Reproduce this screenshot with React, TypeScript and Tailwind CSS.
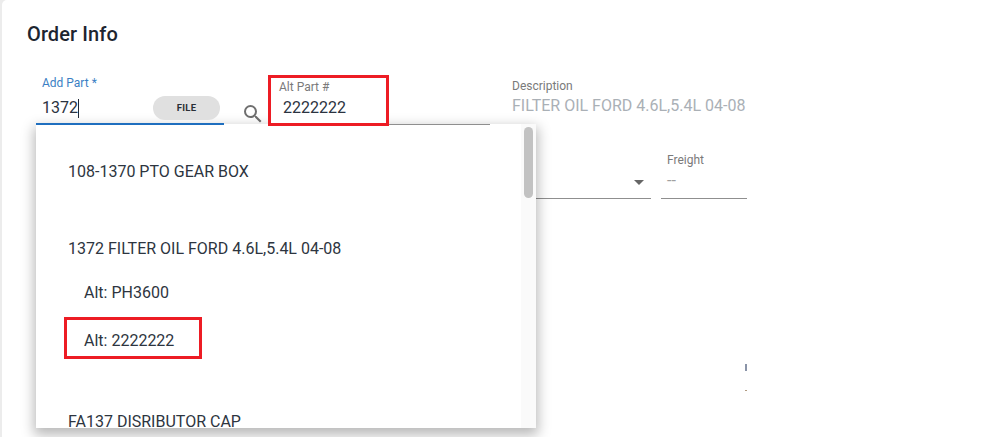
import { MdSearch } from 'react-icons/md';

const font = "font-['Roboto',sans-serif]";

function PartDropdown() {
  return (
    <div className="absolute left-[36px] top-[124px] flex h-[304px] w-[500px] overflow-hidden bg-white shadow-[0_5px_12px_2px_rgba(0,0,0,0.28)]">
      <div className="flex-1 overflow-hidden pl-[32px] text-[16px] leading-[20px] text-[#2d3540]">
        <div className="pt-[38px]">108-1370 PTO GEAR BOX</div>
        <div className="pt-[57px]">1372 FILTER OIL FORD 4.6L,5.4L 04-08</div>
        <div className="pl-[16px] pt-[24px]">Alt: PH3600</div>
        <div className="pl-[16px] pt-[28px]">Alt: 2222222</div>
        <div className="pt-[61px]">FA137 DISRIBUTOR CAP</div>
      </div>
      <div className="w-[15px] bg-[#fafafa] pl-[3px] pt-[3px]">
        <div className="h-[71px] w-[9px] rounded-[5px] bg-[#c2c2c2]" />
      </div>
    </div>
  );
}

export default function App() {
  return (
    <div className={`${font} relative h-[437px] w-[983px] overflow-hidden bg-[#ececec] pl-[2px]`}>
      <div className="h-full rounded-tl-[5px] bg-white pl-[25px] pt-[22px]">
        <h1 className="text-[20px] font-medium leading-[24px] tracking-[0.1px] text-[#1d2530]">Order Info</h1>

        <div className="mt-[29px] flex h-[50px] items-stretch">
          <div className="relative z-10 ml-[9px] w-[188px] border-b-2 border-[#1f6fbf] pl-[6px] pt-[1px]">
            <div className="text-[12px] leading-[14px] text-[#3b7fc4]">Add Part *</div>
            <div className="mt-[6px] flex h-[24px] items-center text-[16px] text-[#2b3340]">
              1372<span className="h-[19px] w-px bg-[#1f2937]" />
            </div>
            <div className="absolute left-[117px] top-[21px] flex h-[24px] w-[67px] items-center justify-center rounded-full bg-[#e0e0e0] text-[9.5px] font-bold tracking-[0.3px] text-[#2a2f36]">
              FILE
            </div>
          </div>
          <div className="ml-[17px] mt-[27px] text-[#6f6f6f]">
            <MdSearch size={24} />
          </div>

          <div className="relative z-10 ml-[3px] w-[222px] self-end border-b border-[#8f8f8f]">
            <div className="absolute -top-[49px] left-0 h-[51px] w-[121px] border-[3px] border-[#ed1c24] bg-white pl-[8px] pt-[2px]">
              <div className="text-[12px] leading-[14px] text-[#7a7a7a]">Alt Part #</div>
              <div className="mt-[3px] pl-[4px] text-[16px] leading-[22px] text-[#2b3340]">2222222</div>
            </div>
          </div>

          <div className="ml-[22px] w-[236px] overflow-hidden whitespace-nowrap">
            <div className="mt-[4px] text-[12px] leading-[14px] text-[#7a7a7a]">Description</div>
            <div className="mt-[1px] text-[16px] leading-[24px] text-[#aab0b6]">FILTER OIL FORD 4.6L,5.4L 04-08</div>
          </div>
        </div>

        <div className="ml-[509px] mt-[24px] flex h-[50px] w-[211px] gap-[10px]">
          <div className="relative w-[115px] border-b border-[#8f8f8f]">
            <span className="absolute right-[7px] top-[31px] h-0 w-0 border-x-[5px] border-t-[5px] border-x-transparent border-t-[#666]" />
          </div>
          <div className="w-[86px] border-b border-[#8f8f8f] pl-[6px]">
            <div className="pt-[4px] text-[12px] leading-[14px] text-[#7a7a7a]">Freight</div>
            <div className="pt-[4px] text-[16px] leading-[20px] text-[#a0a0a0]">--</div>
          </div>
        </div>
      </div>

      <PartDropdown />
      <div className="absolute left-[64px] top-[317px] h-[42px] w-[138px] border-[3px] border-[#ed1c24]" />
      <div className="absolute left-[745px] top-[364px] h-[7px] w-[2px] bg-[#8a94a8]" />
      <div className="absolute left-[745px] top-[390px] h-px w-[2px] bg-[#b09a80]" />
    </div>
  );
}
